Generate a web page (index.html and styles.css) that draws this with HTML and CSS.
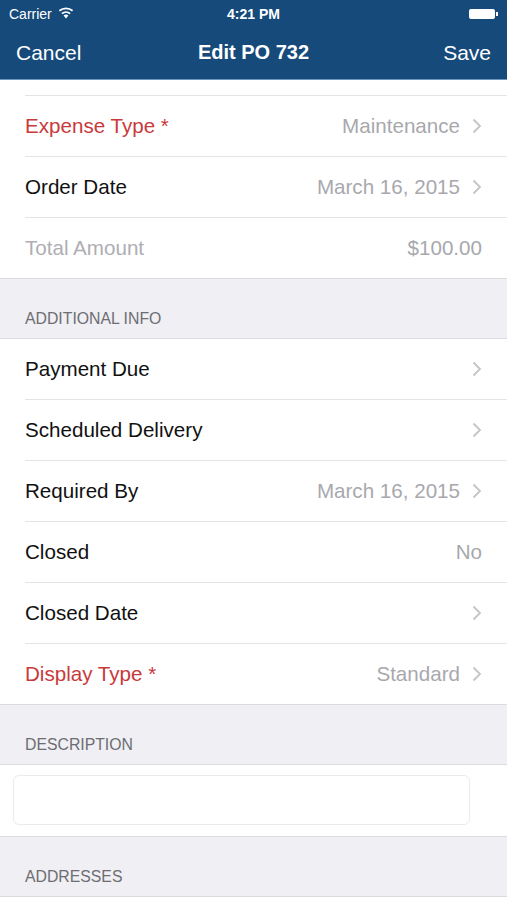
FILE: index.html
```html
<!DOCTYPE html>
<html lang="en">
<head>
    <meta charset="UTF-8">
    <title>Edit PO 732</title>
    <link rel="stylesheet" href="styles.css">
</head>
<body>
    <div class="header">
        <div class="status">
            <div class="carrier">
                Carrier
                <svg class="wifi" width="16" height="12" viewBox="0 0 16 12">
                    <path d="M8 11.5 L5.6 8.6 A3.6 3.6 0 0 1 10.4 8.6 Z" fill="#fff"/>
                    <path d="M3.9 6.6 A6.3 6.3 0 0 1 12.1 6.6" stroke="#fff" stroke-width="1.8" fill="none"/>
                    <path d="M1.4 3.8 A10 10 0 0 1 14.6 3.8" stroke="#fff" stroke-width="1.8" fill="none"/>
                </svg>
            </div>
            <div class="clock">4:21 PM</div>
            <div class="battery"><span class="battery-body"></span><span class="battery-tip"></span></div>
        </div>
        <div class="navbar">
            <span class="nav-btn">Cancel</span>
            <span class="nav-title">Edit PO 732</span>
            <span class="nav-btn">Save</span>
        </div>
    </div>

    <div class="group">
        <div class="cell-partial"></div>
        <div class="cell">
            <span class="label required">Expense Type *</span>
            <span class="value">Maintenance</span>
            <svg class="chevron" width="10" height="16" viewBox="0 0 10 16"><polyline points="1.5,1.5 8,8 1.5,14.5"/></svg>
        </div>
        <div class="cell">
            <span class="label">Order Date</span>
            <span class="value">March 16, 2015</span>
            <svg class="chevron" width="10" height="16" viewBox="0 0 10 16"><polyline points="1.5,1.5 8,8 1.5,14.5"/></svg>
        </div>
        <div class="cell">
            <span class="label disabled">Total Amount</span>
            <span class="value">$100.00</span>
        </div>
    </div>

    <div class="section-title">ADDITIONAL INFO</div>
    <div class="group">
        <div class="cell">
            <span class="label">Payment Due</span>
            <span class="value"></span>
            <svg class="chevron" width="10" height="16" viewBox="0 0 10 16"><polyline points="1.5,1.5 8,8 1.5,14.5"/></svg>
        </div>
        <div class="cell">
            <span class="label">Scheduled Delivery</span>
            <span class="value"></span>
            <svg class="chevron" width="10" height="16" viewBox="0 0 10 16"><polyline points="1.5,1.5 8,8 1.5,14.5"/></svg>
        </div>
        <div class="cell">
            <span class="label">Required By</span>
            <span class="value">March 16, 2015</span>
            <svg class="chevron" width="10" height="16" viewBox="0 0 10 16"><polyline points="1.5,1.5 8,8 1.5,14.5"/></svg>
        </div>
        <div class="cell">
            <span class="label">Closed</span>
            <span class="value">No</span>
        </div>
        <div class="cell">
            <span class="label">Closed Date</span>
            <span class="value"></span>
            <svg class="chevron" width="10" height="16" viewBox="0 0 10 16"><polyline points="1.5,1.5 8,8 1.5,14.5"/></svg>
        </div>
        <div class="cell">
            <span class="label required">Display Type *</span>
            <span class="value">Standard</span>
            <svg class="chevron" width="10" height="16" viewBox="0 0 10 16"><polyline points="1.5,1.5 8,8 1.5,14.5"/></svg>
        </div>
    </div>

    <div class="section-title">DESCRIPTION</div>
    <div class="group text-group">
        <div class="textbox"></div>
    </div>

    <div class="section-title">ADDRESSES</div>
    <div class="group last-group"></div>
</body>
</html>
```

FILE: styles.css
```css
body {
    margin: 0;
    width: 507px;
    font-family: "Liberation Sans", Arial, sans-serif;
    background-color: #efeff4;
}
.header {
    background-color: #164a7b;
    color: #fff;
    border-bottom: 1px solid #6d93b8;
}
.status {
    height: 28px;
    display: flex;
    align-items: center;
    justify-content: space-between;
    padding: 0 9px;
    font-size: 14px;
}
.carrier {
    width: 120px;
    display: flex;
    align-items: center;
    gap: 6px;
}
.wifi {
    margin-top: -2px;
}
.clock {
    font-weight: bold;
}
.battery {
    width: 120px;
    display: flex;
    justify-content: flex-end;
    align-items: center;
}
.battery-body {
    width: 26px;
    height: 10px;
    background: #fff;
    border-radius: 2px;
}
.battery-tip {
    width: 2px;
    height: 4px;
    margin-left: 1px;
    background: #fff;
}
.navbar {
    height: 51px;
    box-sizing: border-box;
    display: flex;
    align-items: center;
    justify-content: space-between;
    padding: 0 16px 2px 16px;
}
.nav-btn {
    font-size: 21px;
    width: 80px;
}
.nav-btn:last-child {
    text-align: right;
}
.nav-title {
    font-size: 20px;
    font-weight: bold;
}
.group {
    background: #fff;
    border-top: 1px solid #dcdce0;
    border-bottom: 1px solid #dcdce0;
}
.group:nth-of-type(2) {
    border-top: none;
}
.cell-partial {
    height: 15px;
}
.cell {
    height: 60px;
    margin-left: 25px;
    padding-right: 25px;
    display: flex;
    align-items: center;
    font-size: 20.6px;
    color: #111;
    border-top: 1px solid #e4e4e8;
}
.group .cell:first-child {
    border-top: none;
}
.cell-partial + .cell {
    border-top: 1px solid #e4e4e8;
}
.label {
    flex: 1;
}
.label.required {
    color: #c93a3b;
}
.label.disabled {
    color: #aeaeb3;
}
.value {
    color: #a8a8ad;
}
.chevron {
    margin-left: 12px;
    fill: none;
    stroke: #c4c4c9;
    stroke-width: 1.8;
}
.section-title {
    height: 59px;
    box-sizing: border-box;
    display: flex;
    align-items: flex-end;
    padding: 0 25px 10px 25px;
    font-size: 15.8px;
    line-height: 19px;
    color: #6d6d72;
}
.text-group {
    padding: 10px 37px 11px 13px;
}
.textbox {
    height: 48px;
    border: 1px solid #ebebef;
    border-radius: 6px;
}
.last-group {
    height: 20px;
    border-bottom: none;
}
```
